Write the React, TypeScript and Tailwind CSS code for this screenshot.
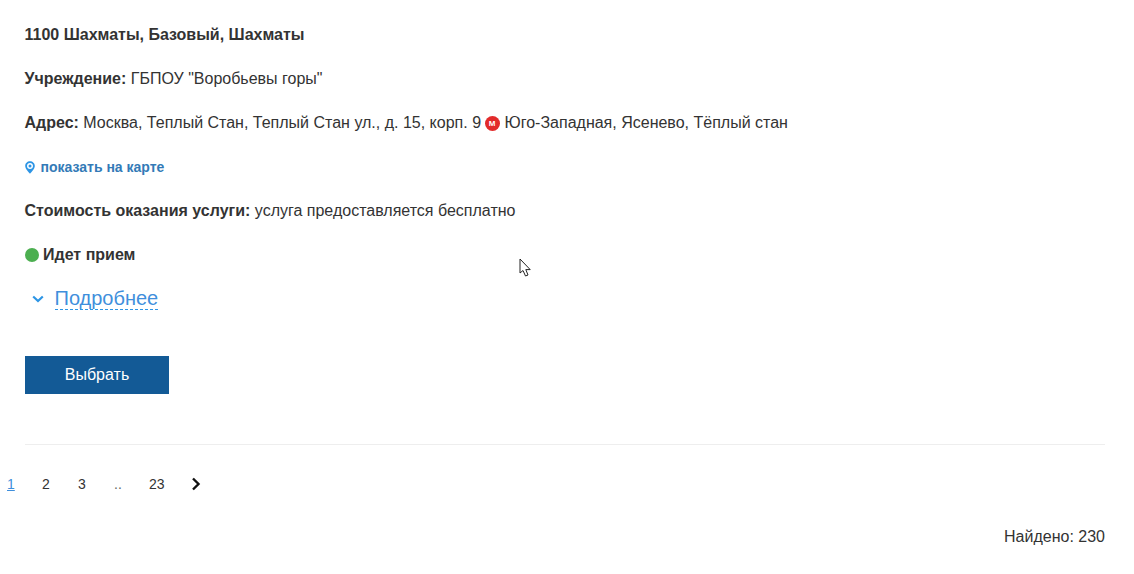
import React from "react";

function Row({ children, className = "" }: { children: React.ReactNode; className?: string }) {
  return <div className={"h-[24px] leading-[24px] mb-[20px] flex items-center whitespace-pre " + className}>{children}</div>;
}

export default function App() {
  return (
    <div className="w-[1134px] h-[574px] bg-white text-[#333333] text-[16px] font-['Liberation_Sans',Arial,sans-serif] overflow-hidden relative">
      <div className="pl-[25px] pr-[29px] pt-[23px]">
        <div className="ml-[-0.5px]">
          <Row><b>1100 Шахматы, Базовый, Шахматы</b></Row>
          <Row><b>Учреждение: </b>ГБПОУ "Воробьевы горы"</Row>
          <Row>
            <b>Адрес: </b>Москва, Теплый Стан, Теплый Стан ул., д. 15, корп. 9
            <span className="ml-[3.5px] mr-[5px] w-[15px] h-[15px] rounded-full bg-[#e22b2b] text-white text-[8px] font-bold leading-[15px] text-center">М</span>
            Юго-Западная, Ясенево, Тёплый стан
          </Row>
          <Row className="text-[14px] font-bold text-[#337ab7]">
            <svg className="mr-[6px]" width="10" height="13" viewBox="0 0 10 13" fill="none">
              <path fillRule="evenodd" clipRule="evenodd" d="M5 0.3C2.3 0.3 0.2 2.4 0.2 5C0.2 8 3.5 11 5 12.7C6.5 11 9.8 8 9.8 5C9.8 2.4 7.7 0.3 5 0.3ZM5 2C6.7 2 8 3.3 8 5C8 6.7 6.7 8 5 8C3.3 8 2 6.7 2 5C2 3.3 3.3 2 5 2Z" fill="#2d95e5" />
              <circle cx="5" cy="5" r="1.5" fill="#2d95e5" />
            </svg>
            показать на карте
          </Row>
          <Row><b>Стоимость оказания услуги: </b>услуга предоставляется бесплатно</Row>
          <Row>
            <span className="mr-[4px] ml-[0.5px] w-[14px] h-[14px] rounded-full bg-[#4caf50]" />
            <b>Идет прием</b>
          </Row>
        </div>
        <div className="h-[24px] flex items-center">
          <svg className="ml-[7px] mr-[11px]" width="12" height="8" viewBox="0 0 12 8" fill="none">
            <path d="M1.2 1.5L6 6L10.8 1.5" stroke="#2d95e5" strokeWidth="2.2" />
          </svg>
          <span className="text-[20px] leading-[22px] ml-[-0.5px] mb-[2px] text-[#3f8fdc] border-b border-dashed border-[#2d95e5]">Подробнее</span>
        </div>
        <button className="mt-[45px] w-[144px] h-[38px] bg-[#135a96] text-white text-[16px] block">Выбрать</button>
        <div className="mt-[50px] border-t border-[#eeeeee]" />
      </div>
      <div className="mt-[27px] h-[24px] flex items-center text-[14px] relative">
        <span className="w-[14px] ml-[7px] text-[#3f8fdc] underline">1</span>
        <span className="ml-[21px] w-[14px]">2</span>
        <span className="ml-[22px] w-[14px]">3</span>
        <span className="ml-[22px] w-[14px] text-[#666666]">..</span>
        <span className="ml-[21px] w-[20px]">23</span>
        <svg className="ml-[22px]" width="10" height="14" viewBox="0 0 10 14" fill="none">
          <path d="M2 1.5L7.5 7L2 12.5" stroke="#111111" strokeWidth="2.4" />
        </svg>
      </div>
      <div className="mt-[29px] pr-[29px] text-right leading-[24px]">Найдено: 230</div>
      <svg className="absolute left-[519px] top-[258px]" width="13" height="20" viewBox="0 0 13 20" fill="none">
        <path d="M1 1V15L4 12.5L6.5 18L9 17L6.8 11.6H11.2L1 1Z" fill="white" stroke="#222222" strokeWidth="1" />
      </svg>
    </div>
  );
}
